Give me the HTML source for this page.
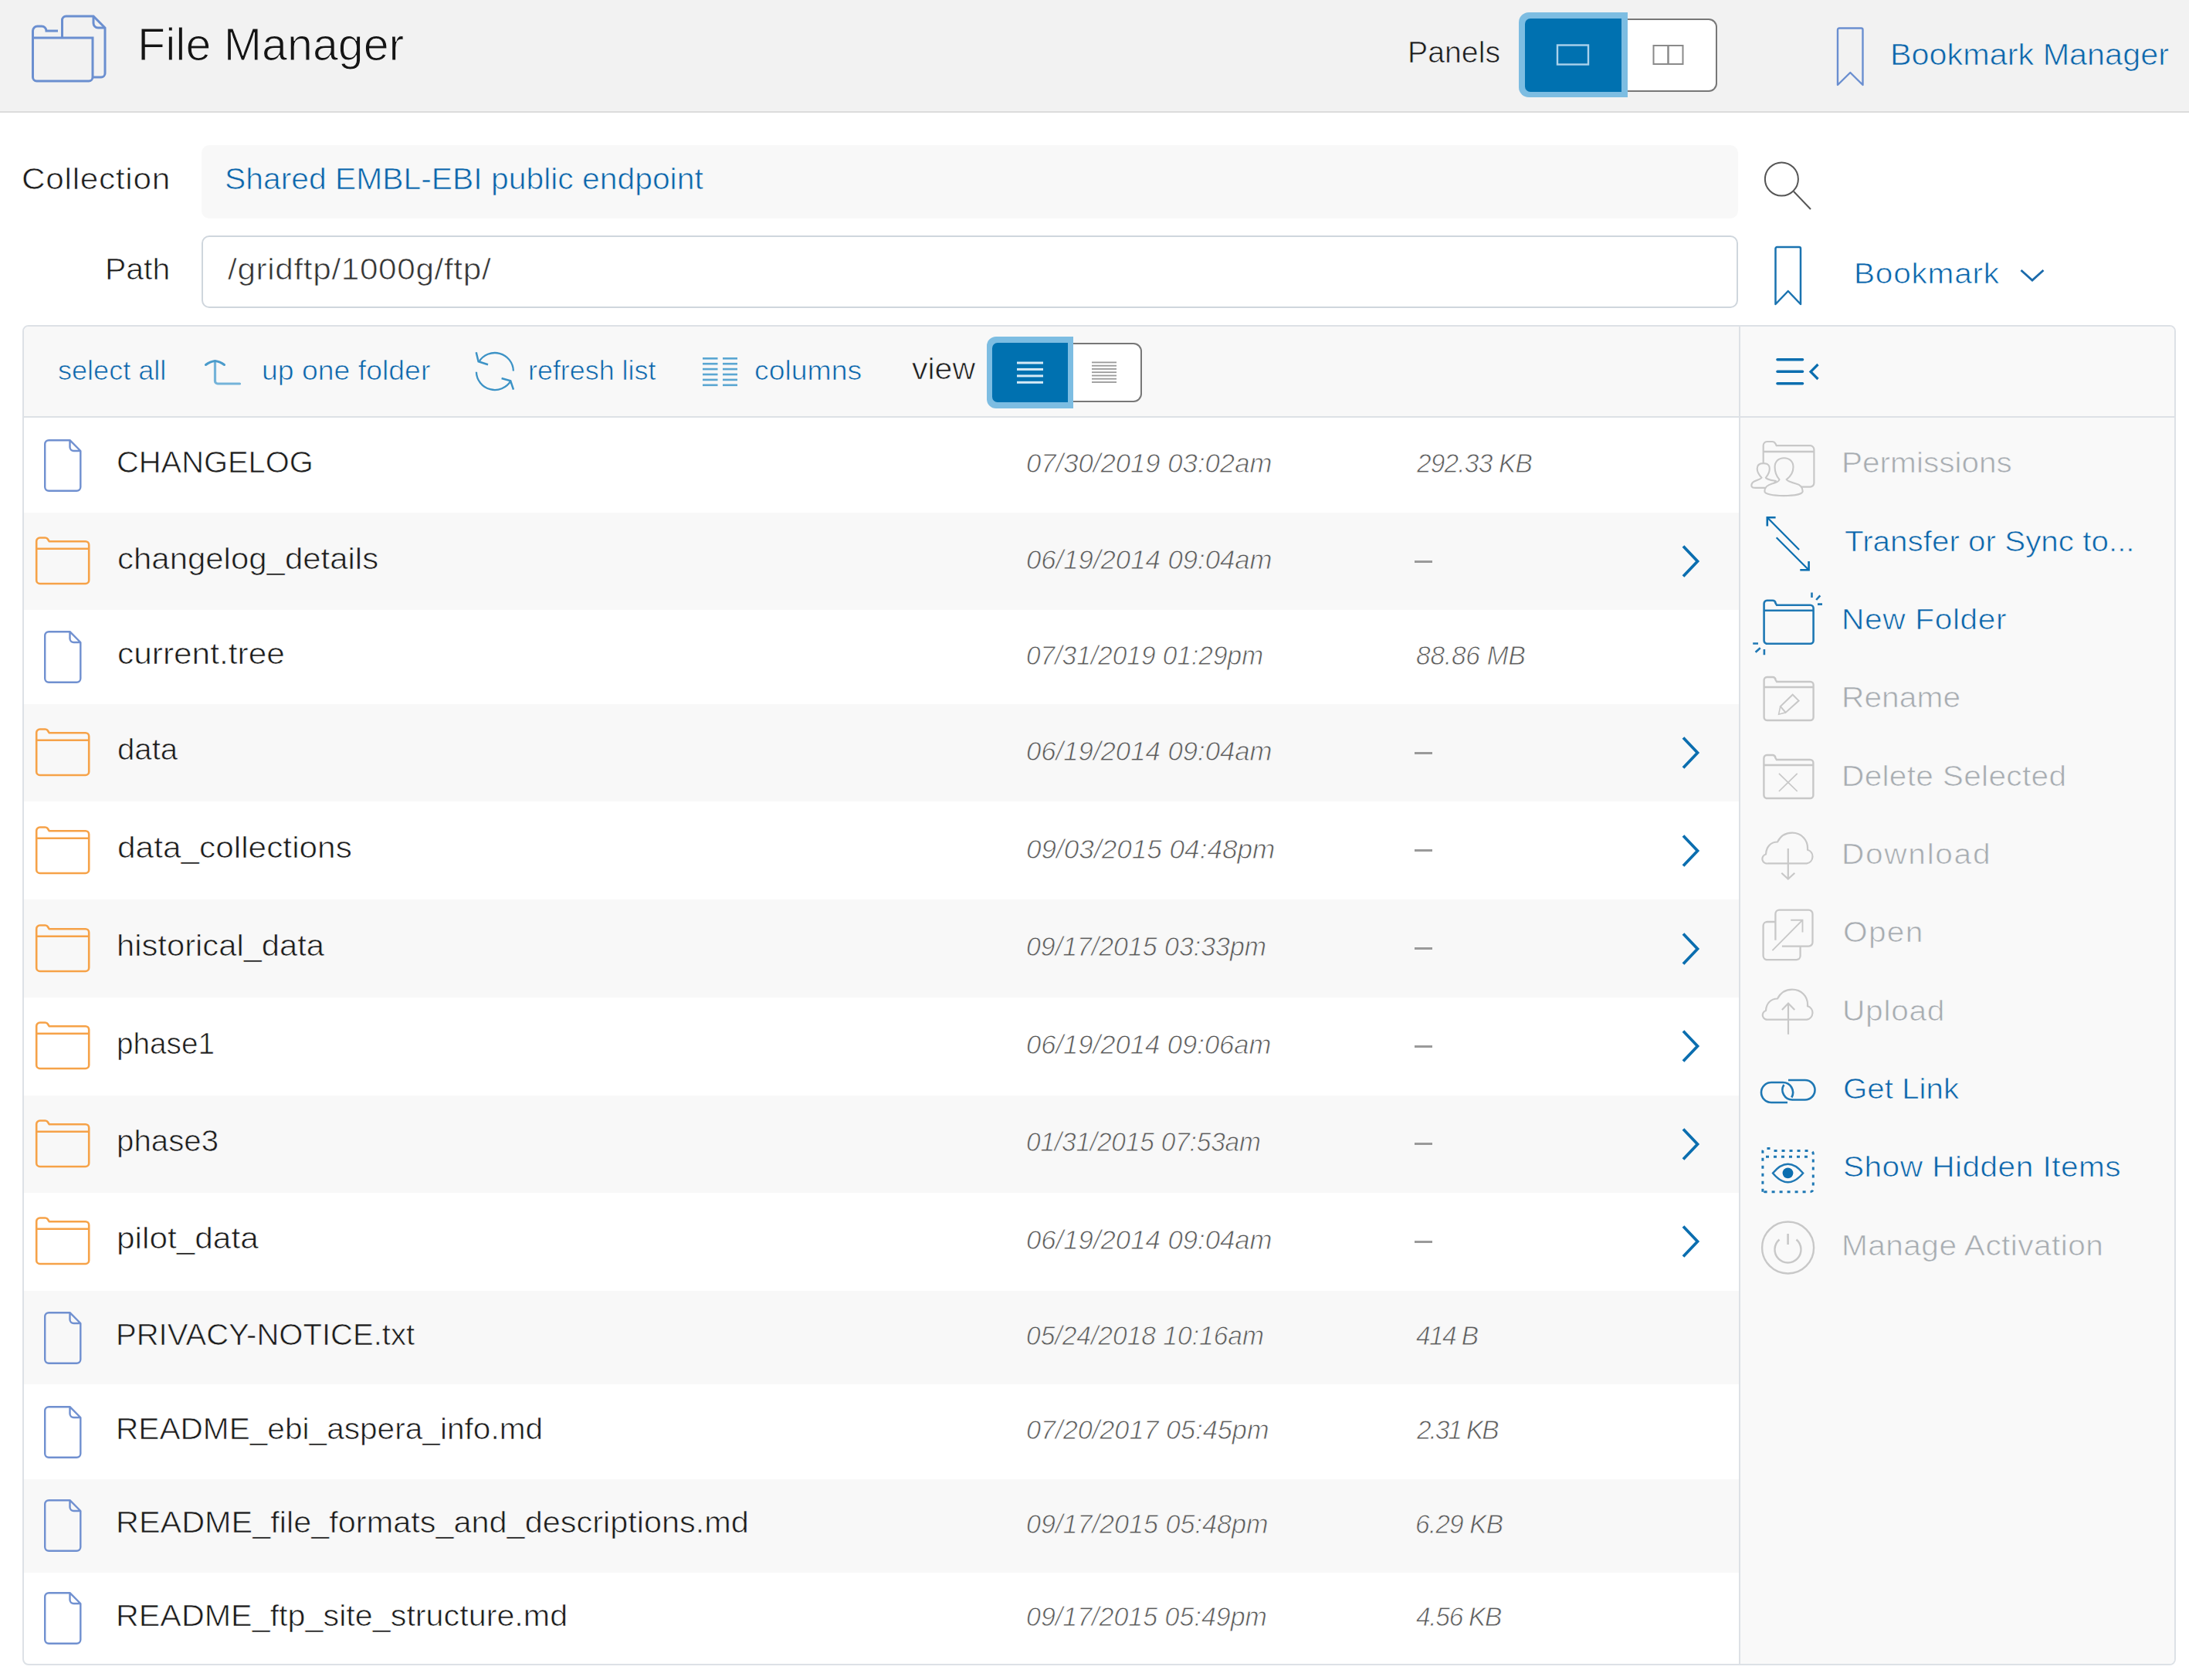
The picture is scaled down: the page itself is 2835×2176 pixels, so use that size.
<!DOCTYPE html>
<html><head><meta charset="utf-8"><style>
html,body{margin:0;padding:0;}
body{width:2835px;height:2176px;position:relative;overflow:hidden;background:#fff;font-family:"Liberation Sans", sans-serif;}
.tx{position:absolute;white-space:nowrap;line-height:1;transform-origin:0 0;}
.ic{position:absolute;overflow:visible;}
</style></head><body>
<div style="position:absolute;left:0;top:0;width:2835px;height:144px;background:#f2f2f2"></div>
<div style="position:absolute;left:0;top:144px;width:2835px;height:2px;background:#dcdcdc"></div>

<!-- header logo -->
<svg class="ic" style="left:40px;top:19px" width="98" height="90" viewBox="0 0 98 90">
 <path d="M40.5,30V7a5,5 0 0 1 5,-5H81L96,17V76a5,5 0 0 1 -5,5H81" fill="none" stroke="#6b8fd0" stroke-width="3"/>
 <path d="M81,2V11a6,6 0 0 0 6,6H96" fill="none" stroke="#6b8fd0" stroke-width="3"/>
 <path d="M2.5,30V21a6,6 0 0 1 6,-6H14a6,6 0 0 1 6,6H35 M2.5,30H80V81a5,5 0 0 1 -5,5H7.5a5,5 0 0 1 -5,-5Z" fill="none" stroke="#6b8fd0" stroke-width="3"/>
</svg>
<!-- panels buttons -->
<div style="position:absolute;left:1966.5px;top:16px;width:141px;height:110px;background:#7dbde2;border-radius:13px 0 0 13px"></div>
<div style="position:absolute;left:2100px;top:24px;width:124px;height:95px;box-sizing:border-box;background:#fff;border:2px solid #777;border-left:none;border-radius:0 11px 11px 0"></div>
<div style="position:absolute;left:2100px;top:16px;width:7.5px;height:110px;background:#7dbde2"></div>
<div style="position:absolute;left:1974.5px;top:24px;width:125.5px;height:95px;background:#0071b0;border-radius:7px 0 0 7px"></div>
<svg class="ic" style="left:2014px;top:56px" width="46" height="30"><rect x="3" y="2.5" width="40" height="25" fill="none" stroke="#aad2ec" stroke-width="2.4"/></svg>
<svg class="ic" style="left:2139px;top:57px" width="44" height="28"><rect x="2.5" y="2" width="19" height="24" fill="none" stroke="#8a8a8a" stroke-width="2"/><rect x="21.5" y="2" width="19" height="24" fill="none" stroke="#8a8a8a" stroke-width="2"/></svg>
<!-- bookmark manager icon -->
<svg class="ic" style="left:2376px;top:33px" width="42" height="82" viewBox="0 0 42 82"><path d="M4,77V5.5a2,2 0 0 1 2,-2H34.5a2,2 0 0 1 2,2V77L20.3,61Z" fill="none" stroke="#6b8fd0" stroke-width="2.4" stroke-linejoin="round"/></svg>
<!-- collection box -->
<div style="position:absolute;left:261px;top:188px;width:1990px;height:95px;background:#f8f8f8;border-radius:10px"></div>
<!-- search -->
<svg class="ic" style="left:2280px;top:205px" width="70" height="70" viewBox="0 0 70 70"><circle cx="27.4" cy="27" r="21.5" fill="none" stroke="#555555" stroke-width="2"/><path d="M43,43L65,66" stroke="#555555" stroke-width="2"/></svg>
<!-- path box -->
<div style="position:absolute;left:261px;top:305px;width:1990px;height:94px;box-sizing:border-box;border:2px solid #cfd6dd;border-radius:10px;background:#fff"></div>
<!-- bookmark icon -->
<svg class="ic" style="left:2296px;top:317px" width="40" height="82" viewBox="0 0 40 82"><path d="M3.5,77V5a2,2 0 0 1 2,-2H34a2,2 0 0 1 2,2V77L19.8,60Z" fill="none" stroke="#1a73b0" stroke-width="2.5" stroke-linejoin="round"/></svg>
<svg class="ic" style="left:2614px;top:346px" width="36" height="20" viewBox="0 0 36 20"><path d="M3.5,4L18,17L32.5,4" fill="none" stroke="#1a6aab" stroke-width="2.8"/></svg>
<!-- panel -->
<div style="position:absolute;left:29px;top:421px;width:2789px;height:1736px;box-sizing:border-box;border:2px solid #dde1e6;border-radius:8px;background:#fff"></div>
<div style="position:absolute;left:31px;top:423px;width:2221px;height:117px;background:#f8f8f8;border-radius:6px 0 0 0"></div>
<div style="position:absolute;left:31px;top:539px;width:2221px;height:2px;background:#dde1e6"></div>
<div style="position:absolute;left:2252px;top:423px;width:564px;height:1732px;background:#f9f9f9;border-radius:0 6px 6px 0"></div>
<div style="position:absolute;left:2252px;top:423px;width:2px;height:1732px;background:#dde1e6"></div>
<div style="position:absolute;left:2254px;top:539px;width:562px;height:2px;background:#dde1e6"></div>

<svg class="ic" style="left:55px;top:566.6px" width="52" height="72" viewBox="0 0 52 72"><path d="M3.2,8.2a5,5 0 0 1 5,-5H35.5L49.3,17V63.8a5,5 0 0 1 -5,5H8.2a5,5 0 0 1 -5,-5Z M35.5,3.2V12a5,5 0 0 0 5,5H49.3" fill="none" stroke="#7090d0" stroke-width="2.4" stroke-linejoin="round"/></svg><div style="position:absolute;left:31px;top:664.3px;width:2221px;height:125.9px;background:#f8f8f8"></div><svg class="ic" style="left:44px;top:694.2px" width="74" height="66" viewBox="0 0 74 66"><path d="M3.2,57.5V7a4.5,4.5 0 0 1 4.5,-4.5H14.5a4,4 0 0 1 3.5,2l1.6,2.7H66.7a4.5,4.5 0 0 1 4.5,4.5V57.5a4.5,4.5 0 0 1 -4.5,4.5H7.7a4.5,4.5 0 0 1 -4.5,-4.5Z M3.2,16.8H71.2" fill="none" stroke="#f6a248" stroke-width="2.6" stroke-linejoin="round"/></svg><svg class="ic" style="left:2174px;top:703.2px" width="30" height="48" viewBox="0 0 30 48"><path d="M6,4.5L24.5,24L6,43.5" fill="none" stroke="#0b6eaf" stroke-width="3.8"/></svg><div style="position:absolute;left:1832px;top:725.8px;width:23px;height:3px;background:#9a9a9a"></div><svg class="ic" style="left:55px;top:815.0px" width="52" height="72" viewBox="0 0 52 72"><path d="M3.2,8.2a5,5 0 0 1 5,-5H35.5L49.3,17V63.8a5,5 0 0 1 -5,5H8.2a5,5 0 0 1 -5,-5Z M35.5,3.2V12a5,5 0 0 0 5,5H49.3" fill="none" stroke="#7090d0" stroke-width="2.4" stroke-linejoin="round"/></svg><div style="position:absolute;left:31px;top:911.8px;width:2221px;height:126.6px;background:#f8f8f8"></div><svg class="ic" style="left:44px;top:942.1px" width="74" height="66" viewBox="0 0 74 66"><path d="M3.2,57.5V7a4.5,4.5 0 0 1 4.5,-4.5H14.5a4,4 0 0 1 3.5,2l1.6,2.7H66.7a4.5,4.5 0 0 1 4.5,4.5V57.5a4.5,4.5 0 0 1 -4.5,4.5H7.7a4.5,4.5 0 0 1 -4.5,-4.5Z M3.2,16.8H71.2" fill="none" stroke="#f6a248" stroke-width="2.6" stroke-linejoin="round"/></svg><svg class="ic" style="left:2174px;top:951.1px" width="30" height="48" viewBox="0 0 30 48"><path d="M6,4.5L24.5,24L6,43.5" fill="none" stroke="#0b6eaf" stroke-width="3.8"/></svg><div style="position:absolute;left:1832px;top:973.6px;width:23px;height:3px;background:#9a9a9a"></div><svg class="ic" style="left:44px;top:1068.8px" width="74" height="66" viewBox="0 0 74 66"><path d="M3.2,57.5V7a4.5,4.5 0 0 1 4.5,-4.5H14.5a4,4 0 0 1 3.5,2l1.6,2.7H66.7a4.5,4.5 0 0 1 4.5,4.5V57.5a4.5,4.5 0 0 1 -4.5,4.5H7.7a4.5,4.5 0 0 1 -4.5,-4.5Z M3.2,16.8H71.2" fill="none" stroke="#f6a248" stroke-width="2.6" stroke-linejoin="round"/></svg><svg class="ic" style="left:2174px;top:1077.8px" width="30" height="48" viewBox="0 0 30 48"><path d="M6,4.5L24.5,24L6,43.5" fill="none" stroke="#0b6eaf" stroke-width="3.8"/></svg><div style="position:absolute;left:1832px;top:1100.3px;width:23px;height:3px;background:#9a9a9a"></div><div style="position:absolute;left:31px;top:1165.3px;width:2221px;height:126.7px;background:#f8f8f8"></div><svg class="ic" style="left:44px;top:1195.7px" width="74" height="66" viewBox="0 0 74 66"><path d="M3.2,57.5V7a4.5,4.5 0 0 1 4.5,-4.5H14.5a4,4 0 0 1 3.5,2l1.6,2.7H66.7a4.5,4.5 0 0 1 4.5,4.5V57.5a4.5,4.5 0 0 1 -4.5,4.5H7.7a4.5,4.5 0 0 1 -4.5,-4.5Z M3.2,16.8H71.2" fill="none" stroke="#f6a248" stroke-width="2.6" stroke-linejoin="round"/></svg><svg class="ic" style="left:2174px;top:1204.7px" width="30" height="48" viewBox="0 0 30 48"><path d="M6,4.5L24.5,24L6,43.5" fill="none" stroke="#0b6eaf" stroke-width="3.8"/></svg><div style="position:absolute;left:1832px;top:1227.2px;width:23px;height:3px;background:#9a9a9a"></div><svg class="ic" style="left:44px;top:1322.3px" width="74" height="66" viewBox="0 0 74 66"><path d="M3.2,57.5V7a4.5,4.5 0 0 1 4.5,-4.5H14.5a4,4 0 0 1 3.5,2l1.6,2.7H66.7a4.5,4.5 0 0 1 4.5,4.5V57.5a4.5,4.5 0 0 1 -4.5,4.5H7.7a4.5,4.5 0 0 1 -4.5,-4.5Z M3.2,16.8H71.2" fill="none" stroke="#f6a248" stroke-width="2.6" stroke-linejoin="round"/></svg><svg class="ic" style="left:2174px;top:1331.3px" width="30" height="48" viewBox="0 0 30 48"><path d="M6,4.5L24.5,24L6,43.5" fill="none" stroke="#0b6eaf" stroke-width="3.8"/></svg><div style="position:absolute;left:1832px;top:1353.8px;width:23px;height:3px;background:#9a9a9a"></div><div style="position:absolute;left:31px;top:1418.7px;width:2221px;height:125.9px;background:#f8f8f8"></div><svg class="ic" style="left:44px;top:1448.7px" width="74" height="66" viewBox="0 0 74 66"><path d="M3.2,57.5V7a4.5,4.5 0 0 1 4.5,-4.5H14.5a4,4 0 0 1 3.5,2l1.6,2.7H66.7a4.5,4.5 0 0 1 4.5,4.5V57.5a4.5,4.5 0 0 1 -4.5,4.5H7.7a4.5,4.5 0 0 1 -4.5,-4.5Z M3.2,16.8H71.2" fill="none" stroke="#f6a248" stroke-width="2.6" stroke-linejoin="round"/></svg><svg class="ic" style="left:2174px;top:1457.7px" width="30" height="48" viewBox="0 0 30 48"><path d="M6,4.5L24.5,24L6,43.5" fill="none" stroke="#0b6eaf" stroke-width="3.8"/></svg><div style="position:absolute;left:1832px;top:1480.2px;width:23px;height:3px;background:#9a9a9a"></div><svg class="ic" style="left:44px;top:1575.2px" width="74" height="66" viewBox="0 0 74 66"><path d="M3.2,57.5V7a4.5,4.5 0 0 1 4.5,-4.5H14.5a4,4 0 0 1 3.5,2l1.6,2.7H66.7a4.5,4.5 0 0 1 4.5,4.5V57.5a4.5,4.5 0 0 1 -4.5,4.5H7.7a4.5,4.5 0 0 1 -4.5,-4.5Z M3.2,16.8H71.2" fill="none" stroke="#f6a248" stroke-width="2.6" stroke-linejoin="round"/></svg><svg class="ic" style="left:2174px;top:1584.2px" width="30" height="48" viewBox="0 0 30 48"><path d="M6,4.5L24.5,24L6,43.5" fill="none" stroke="#0b6eaf" stroke-width="3.8"/></svg><div style="position:absolute;left:1832px;top:1606.7px;width:23px;height:3px;background:#9a9a9a"></div><div style="position:absolute;left:31px;top:1671.8px;width:2221px;height:121.6px;background:#f8f8f8"></div><svg class="ic" style="left:55px;top:1696.6px" width="52" height="72" viewBox="0 0 52 72"><path d="M3.2,8.2a5,5 0 0 1 5,-5H35.5L49.3,17V63.8a5,5 0 0 1 -5,5H8.2a5,5 0 0 1 -5,-5Z M35.5,3.2V12a5,5 0 0 0 5,5H49.3" fill="none" stroke="#7090d0" stroke-width="2.4" stroke-linejoin="round"/></svg><svg class="ic" style="left:55px;top:1818.5px" width="52" height="72" viewBox="0 0 52 72"><path d="M3.2,8.2a5,5 0 0 1 5,-5H35.5L49.3,17V63.8a5,5 0 0 1 -5,5H8.2a5,5 0 0 1 -5,-5Z M35.5,3.2V12a5,5 0 0 0 5,5H49.3" fill="none" stroke="#7090d0" stroke-width="2.4" stroke-linejoin="round"/></svg><div style="position:absolute;left:31px;top:1915.5px;width:2221px;height:121.0px;background:#f8f8f8"></div><svg class="ic" style="left:55px;top:1940.0px" width="52" height="72" viewBox="0 0 52 72"><path d="M3.2,8.2a5,5 0 0 1 5,-5H35.5L49.3,17V63.8a5,5 0 0 1 -5,5H8.2a5,5 0 0 1 -5,-5Z M35.5,3.2V12a5,5 0 0 0 5,5H49.3" fill="none" stroke="#7090d0" stroke-width="2.4" stroke-linejoin="round"/></svg><svg class="ic" style="left:55px;top:2060.3px" width="52" height="72" viewBox="0 0 52 72"><path d="M3.2,8.2a5,5 0 0 1 5,-5H35.5L49.3,17V63.8a5,5 0 0 1 -5,5H8.2a5,5 0 0 1 -5,-5Z M35.5,3.2V12a5,5 0 0 0 5,5H49.3" fill="none" stroke="#7090d0" stroke-width="2.4" stroke-linejoin="round"/></svg>

<svg class="ic" style="left:262px;top:462px" width="52" height="40" viewBox="0 0 52 40"><path d="M16.5,6.5V31.5a3.5,3.5 0 0 0 3.5,3.5H48.5" fill="none" stroke="#74b3d9" stroke-width="3.2" stroke-linecap="round"/><path d="M4.5,10.5Q10,6.2 16.5,5.4Q23,6.2 28.5,10.5" fill="none" stroke="#4a9bcb" stroke-width="3" stroke-linecap="round"/></svg>
<svg class="ic" style="left:612px;top:452px" width="58" height="58" viewBox="0 0 58 58">
 <path d="M8.28,16.72A24,24 0 0 1 52.89,28.41" fill="none" stroke="#3d93c6" stroke-width="2.3"/>
 <path d="M4.7,4.3L7.6,16.3L20,20.3" fill="none" stroke="#3d93c6" stroke-width="2.5"/>
 <path d="M4.9,29.7A24,24 0 0 0 49.45,41.4" fill="none" stroke="#3d93c6" stroke-width="2.3"/>
 <path d="M37.6,38L49.2,41.3L53,52.6" fill="none" stroke="#3d93c6" stroke-width="2.5"/>
</svg>
<svg class="ic" style="left:908px;top:460px" width="50" height="42" viewBox="0 0 50 42">
 <rect x="2" y="3.0" width="19.5" height="2.6" fill="#5aa6d2"/><rect x="28" y="3.0" width="19" height="2.6" fill="#5aa6d2"/><rect x="2" y="9.9" width="19.5" height="2.6" fill="#5aa6d2"/><rect x="28" y="9.9" width="19" height="2.6" fill="#5aa6d2"/><rect x="2" y="16.8" width="19.5" height="2.6" fill="#5aa6d2"/><rect x="28" y="16.8" width="19" height="2.6" fill="#5aa6d2"/><rect x="2" y="23.7" width="19.5" height="2.6" fill="#5aa6d2"/><rect x="28" y="23.7" width="19" height="2.6" fill="#5aa6d2"/><rect x="2" y="30.6" width="19.5" height="2.6" fill="#5aa6d2"/><rect x="28" y="30.6" width="19" height="2.6" fill="#5aa6d2"/><rect x="2" y="37.5" width="19.5" height="2.6" fill="#5aa6d2"/><rect x="28" y="37.5" width="19" height="2.6" fill="#5aa6d2"/>
</svg>
<!-- view buttons -->
<div style="position:absolute;left:1278px;top:436px;width:112px;height:93px;background:#7dbde2;border-radius:12px 0 0 12px"></div>
<div style="position:absolute;left:1383px;top:444px;width:96px;height:77px;box-sizing:border-box;background:#fff;border:2px solid #777;border-left:none;border-radius:0 11px 11px 0"></div>
<div style="position:absolute;left:1383px;top:436px;width:7px;height:93px;background:#7dbde2"></div>
<div style="position:absolute;left:1285px;top:444px;width:98px;height:77px;background:#0071b0;border-radius:7px 0 0 7px"></div>
<svg class="ic" style="left:1314px;top:466px" width="40" height="34"><rect x="3" y="2.5" width="34" height="3" fill="#d6eaf6"/><rect x="3" y="10.9" width="34" height="3" fill="#d6eaf6"/><rect x="3" y="19.4" width="34" height="3" fill="#d6eaf6"/><rect x="3" y="27.8" width="34" height="3" fill="#d6eaf6"/></svg>
<svg class="ic" style="left:1412px;top:466px" width="36" height="34"><rect x="2" y="2.5" width="32" height="1.8" fill="#9a9a9a"/><rect x="2" y="6.8" width="32" height="1.8" fill="#9a9a9a"/><rect x="2" y="11.0" width="32" height="1.8" fill="#9a9a9a"/><rect x="2" y="15.3" width="32" height="1.8" fill="#9a9a9a"/><rect x="2" y="19.6" width="32" height="1.8" fill="#9a9a9a"/><rect x="2" y="23.8" width="32" height="1.8" fill="#9a9a9a"/><rect x="2" y="28.1" width="32" height="1.8" fill="#9a9a9a"/></svg>
<!-- hamburger -->
<svg class="ic" style="left:2298px;top:460px" width="62" height="42" viewBox="0 0 62 42">
 <path d="M4,5.8H36.5M4,21.3H36.5M4,36.8H36.5" stroke="#0b6eaf" stroke-width="3.6" stroke-linecap="round"/>
 <path d="M56.5,12L47,21.5L56.5,31" fill="none" stroke="#0b6eaf" stroke-width="3.2"/>
</svg>


<svg class="ic" style="left:2262px;top:565px" width="96" height="82" viewBox="0 0 96 82">
 <path d="M21.7,36V12a5,5 0 0 1 5,-5H33a5,5 0 0 1 4.5,2.8l1.2,2.4H82.4a5,5 0 0 1 5,5V60.6a5,5 0 0 1 -5,5H68" fill="none" stroke="#c8c8c8" stroke-width="2.2"/>
 <path d="M21.7,20H87.4" stroke="#c8c8c8" stroke-width="2.4"/>
 <path d="M19.5,53.7C15,49 13.7,45 13.7,42C13.7,37.5 17,35.1 21.75,35.1C26.5,35.1 29.8,37.5 29.8,42C29.8,46 28,50 24.9,53.7C26,56 30,56.5 38,58L30,66.9H12C8,66.9 6.3,66 6.3,64C6.3,62 7,60 10,58.5C14,56.5 18,56 19.5,53.7Z" fill="#f9f9f9" stroke="#c8c8c8" stroke-width="2.1" stroke-linejoin="round"/>
 <path d="M42.5,56.1C38,51 36.6,46 36.6,40C36.6,33 41,28.3 48.5,28.3C56,28.3 60.5,33 60.5,40C60.5,46 58.5,51 51.7,56.1C53,58.5 58,60 64,61.5C70,63 72.7,67 72.7,71.3C72.7,75 62,77.1 48,77.1C34,77.1 23.4,75 23.4,71.3C23.4,67 27,63 33,61.5C39,60 42,58.5 42.5,56.1Z" fill="#f9f9f9" stroke="#c8c8c8" stroke-width="2.1"/>
</svg>
<svg class="ic" style="left:2282px;top:664px" width="68" height="80" viewBox="0 0 68 80">
 <path d="M6.8,6.3L48.1,48.1 M18.7,32.3L60.6,74.2" stroke="#0b6eaf" stroke-width="2.2"/>
 <path d="M17.6,6.3H6.8V17.6 M49.3,74.2H60.6V62.9" fill="none" stroke="#0b6eaf" stroke-width="2.6"/>
</svg>
<svg class="ic" style="left:2266px;top:764px" width="98" height="88" viewBox="0 0 98 88">
 <path d="M18.6,23.8V17.8a4,4 0 0 1 4,-4H29.6a4,4 0 0 1 4,3.5l1.5,2.5H78.6a4,4 0 0 1 4,4V65.8a4,4 0 0 1 -4,4H22.6a4,4 0 0 1 -4,-4Z M18.6,26.8H82.6" fill="none" stroke="#1f78b4" stroke-width="2.6" />
 <path d="M80.5,3.4V10.1 M86.2,13L91.3,7.3 M88,18.6H94" stroke="#1f78b4" stroke-width="2.6"/>
 <path d="M4.2,69.5H11 M7.6,80.8L13.8,75.2 M18.9,76.9V84.2" stroke="#1f78b4" stroke-width="2.6"/>
</svg>
<svg class="ic" style="left:2266px;top:862px" width="98" height="80" viewBox="0 0 98 80">
 <path d="M18.6,25V19a4,4 0 0 1 4,-4H29.6a4,4 0 0 1 4,3.5l1.5,2.5H78.6a4,4 0 0 1 4,4V67a4,4 0 0 1 -4,4H22.6a4,4 0 0 1 -4,-4Z M18.6,28H82.6" fill="none" stroke="#c8c8c8" stroke-width="2.4" />
 <path d="M55.7,37.7L63.6,45.6L46.6,60.9L39.8,53Z" fill="none" stroke="#c8c8c8" stroke-width="2"/>
 <path d="M39.8,53L37.6,63.2L46.6,60.9" fill="none" stroke="#c8c8c8" stroke-width="1.6"/>
</svg>
<svg class="ic" style="left:2266px;top:964px" width="98" height="80" viewBox="0 0 98 80">
 <path d="M18.4,24V18a4,4 0 0 1 4,-4H29.4a4,4 0 0 1 4,3.5l1.5,2.5H78.4a4,4 0 0 1 4,4V66a4,4 0 0 1 -4,4H22.4a4,4 0 0 1 -4,-4Z M18.4,27H82.4" fill="none" stroke="#c8c8c8" stroke-width="2.4" />
 <path d="M37.9,37.8L61.7,61 M61.7,37.8L37.9,61" stroke="#c8c8c8" stroke-width="1.7"/>
</svg>
<svg class="ic" style="left:2266px;top:1064px" width="98" height="82" viewBox="0 0 98 82">
 <path d="M24,54.3H74a9,9 0 0 0 1,-17.5C76,24 67,14.7 55,14.7C46.5,14.7 40,19 36,26.5C27,26.5 21.5,33 21,42.5a6,6 0 0 0 3,11.8Z" fill="none" stroke="#c8c8c8" stroke-width="2.2" stroke-linejoin="round"/>
 <path d="M49.8,35V74.6 M41.3,66.7L49.8,74.6L58.3,66.7" fill="none" stroke="#c8c8c8" stroke-width="2.2"/>
</svg>
<svg class="ic" style="left:2266px;top:1164px" width="98" height="86" viewBox="0 0 98 86">
 <path d="M33.4,30H22.6a5,5 0 0 0 -5,5V74.1a5,5 0 0 0 5,5H60.6a5,5 0 0 0 5,-5V62.6 M33.4,53.7V19.7a5,5 0 0 1 5,-5H76.5a5,5 0 0 1 5,5V56.6a5,5 0 0 1 -5,5H41.9" fill="none" stroke="#c8c8c8" stroke-width="2.3"/>
 <path d="M29.4,67.2L68.5,27.7 M53.2,27.7H68.5V43.5" fill="none" stroke="#c8c8c8" stroke-width="1.9"/>
</svg>
<svg class="ic" style="left:2266px;top:1264px" width="98" height="82" viewBox="0 0 98 82">
 <path d="M24,56.6H74a9,9 0 0 0 1,-17.5C76,26.6 67,17.6 55,17.6C46.5,17.6 40,22 36,29.5C27,29.5 21.5,36 21,45a6,6 0 0 0 3,11.6Z" fill="none" stroke="#c8c8c8" stroke-width="2.2" stroke-linejoin="round"/>
 <path d="M50,35.6V75.8 M41.9,44.1L50,35.6L58.3,44.1" fill="none" stroke="#c8c8c8" stroke-width="2.2"/>
</svg>
<svg class="ic" style="left:2266px;top:1384px" width="98" height="58" viewBox="0 0 98 58">
 <path d="M49,44H28A13,13 0 0 1 28,18H43A13,13 0 0 1 54.3,37.5" fill="none" stroke="#1f78b4" stroke-width="2.6"/>
 <path d="M50,15H71.75A12.75,12.75 0 0 1 71.75,40.5H55.25A12.75,12.75 0 0 1 44.4,21" fill="none" stroke="#1f78b4" stroke-width="2.6"/>
</svg>
<svg class="ic" style="left:2266px;top:1475px" width="98" height="80" viewBox="0 0 98 80">
 <path d="M16.9,68.8V17a4,4 0 0 1 4,-4.5H27a4,4 0 0 1 3.5,2l1,1H78.3a4,4 0 0 1 4,4V64.8a4,4 0 0 1 -4,4H20.9a4,4 0 0 1 -4,-4Z" fill="none" stroke="#1f78b4" stroke-width="3" stroke-dasharray="4 6"/>
 <path d="M20,23.3H80" fill="none" stroke="#1f78b4" stroke-width="3" stroke-dasharray="4 6" stroke-dashoffset="-1"/>
 <path d="M30,44.5Q49.5,21 69.2,44.5Q49.5,68 30,44.5Z" fill="none" stroke="#1f78b4" stroke-width="2.4"/>
 <circle cx="49.5" cy="44.3" r="6.9" fill="#0b6eaf"/>
</svg>
<svg class="ic" style="left:2276px;top:1577px" width="80" height="80" viewBox="0 0 80 80">
 <circle cx="39.6" cy="39" r="33.5" fill="none" stroke="#c8c8c8" stroke-width="2.4"/>
 <path d="M28.5,28.5A17,17 0 1 0 50.5,28.5" fill="none" stroke="#c8c8c8" stroke-width="2.4"/>
 <path d="M39.6,21V35" stroke="#c8c8c8" stroke-width="2.6"/>
</svg>

<div class="tx" style="left:177.56px;top:27.91px;font-size:60px;color:#141414;letter-spacing:0.000px;transform:scaleX(0.9862);-webkit-text-stroke:1.2px #f2f2f2">File Manager</div><div class="tx" style="left:1822.64px;top:49.31px;font-size:38.5px;color:#1c1c1c;letter-spacing:0.000px;transform:scaleX(1.0197);-webkit-text-stroke:0.7px #f2f2f2">Panels</div><div class="tx" style="left:2447.53px;top:52.33px;font-size:38px;color:#0b65ab;letter-spacing:0.000px;transform:scaleX(1.0884);-webkit-text-stroke:0.7px #f2f2f2">Bookmark Manager</div><div class="tx" style="left:27.90px;top:213.11px;font-size:38.5px;color:#1c1c1c;letter-spacing:0.635px;transform:scaleX(1.1000);-webkit-text-stroke:0.7px #ffffff">Collection</div><div class="tx" style="left:291.34px;top:213.11px;font-size:38.5px;color:#0b65ab;letter-spacing:0.000px;transform:scaleX(1.0607);-webkit-text-stroke:0.7px #f8f8f8">Shared EMBL-EBI public endpoint</div><div class="tx" style="left:135.81px;top:330.11px;font-size:38.5px;color:#1c1c1c;letter-spacing:0.000px;transform:scaleX(1.0639);-webkit-text-stroke:0.7px #ffffff">Path</div><div class="tx" style="left:294.70px;top:330.11px;font-size:38.5px;color:#333333;letter-spacing:0.558px;transform:scaleX(1.1000);-webkit-text-stroke:0.7px #ffffff">/gridftp/1000g/ftp/</div><div class="tx" style="left:2400.70px;top:336.08px;font-size:37px;color:#0b65ab;letter-spacing:0.642px;transform:scaleX(1.1000);-webkit-text-stroke:0.7px #ffffff">Bookmark</div><div class="tx" style="left:74.80px;top:462.47px;font-size:35px;color:#0b65ab;letter-spacing:0.000px;transform:scaleX(1.0305);-webkit-text-stroke:0.7px #f8f8f8">select all</div><div class="tx" style="left:338.56px;top:462.47px;font-size:35px;color:#0b65ab;letter-spacing:0.000px;transform:scaleX(1.0687);-webkit-text-stroke:0.7px #f8f8f8">up one folder</div><div class="tx" style="left:684.25px;top:462.47px;font-size:35px;color:#0b65ab;letter-spacing:-0.000px;transform:scaleX(1.0250);-webkit-text-stroke:0.7px #f8f8f8">refresh list</div><div class="tx" style="left:977.23px;top:462.47px;font-size:35px;color:#0b65ab;letter-spacing:0.000px;transform:scaleX(1.0681);-webkit-text-stroke:0.7px #f8f8f8">columns</div><div class="tx" style="left:1181.20px;top:458.93px;font-size:38px;color:#1c1c1c;letter-spacing:0.000px;transform:scaleX(1.0787);-webkit-text-stroke:0.7px #f8f8f8">view</div><div class="tx" style="left:150.98px;top:578.91px;font-size:39.5px;color:#1c1c1c;letter-spacing:0.000px;transform:scaleX(1.0093);-webkit-text-stroke:0.7px #ffffff">CHANGELOG</div><div class="tx" style="left:1328.99px;top:583.45px;font-size:34.5px;color:#5a5a5a;letter-spacing:0.000px;transform:scaleX(1.0058);font-style:italic;-webkit-text-stroke:0.8px #ffffff">07/30/2019 03:02am</div><div class="tx" style="left:1834.97px;top:583.45px;font-size:34.5px;color:#5a5a5a;letter-spacing:-0.849px;transform:scaleX(0.9700);font-style:italic;-webkit-text-stroke:0.8px #ffffff">292.33 KB</div><div class="tx" style="left:151.94px;top:703.51px;font-size:39.5px;color:#1c1c1c;letter-spacing:0.000px;transform:scaleX(1.0619);-webkit-text-stroke:0.7px #f8f8f8">changelog_details</div><div class="tx" style="left:1328.99px;top:708.05px;font-size:34.5px;color:#5a5a5a;letter-spacing:0.000px;transform:scaleX(1.0064);font-style:italic;-webkit-text-stroke:0.8px #f8f8f8">06/19/2014 09:04am</div><div class="tx" style="left:151.93px;top:827.26px;font-size:39.5px;color:#1c1c1c;letter-spacing:0.000px;transform:scaleX(1.0735);-webkit-text-stroke:0.7px #ffffff">current.tree</div><div class="tx" style="left:1329.03px;top:831.80px;font-size:34.5px;color:#5a5a5a;letter-spacing:0.000px;transform:scaleX(0.9702);font-style:italic;-webkit-text-stroke:0.8px #ffffff">07/31/2019 01:29pm</div><div class="tx" style="left:1834.00px;top:831.80px;font-size:34.5px;color:#5a5a5a;letter-spacing:-0.215px;transform:scaleX(0.9700);font-style:italic;-webkit-text-stroke:0.8px #ffffff">88.86 MB</div><div class="tx" style="left:151.98px;top:951.36px;font-size:39.5px;color:#1c1c1c;letter-spacing:0.000px;transform:scaleX(1.0170);-webkit-text-stroke:0.7px #f8f8f8">data</div><div class="tx" style="left:1328.99px;top:955.90px;font-size:34.5px;color:#5a5a5a;letter-spacing:0.000px;transform:scaleX(1.0064);font-style:italic;-webkit-text-stroke:0.8px #f8f8f8">06/19/2014 09:04am</div><div class="tx" style="left:151.93px;top:1078.11px;font-size:39.5px;color:#1c1c1c;letter-spacing:0.000px;transform:scaleX(1.0727);-webkit-text-stroke:0.7px #ffffff">data_collections</div><div class="tx" style="left:1328.98px;top:1082.65px;font-size:34.5px;color:#5a5a5a;letter-spacing:-0.000px;transform:scaleX(1.0182);font-style:italic;-webkit-text-stroke:0.8px #ffffff">09/03/2015 04:48pm</div><div class="tx" style="left:150.89px;top:1204.91px;font-size:39.5px;color:#1c1c1c;letter-spacing:0.000px;transform:scaleX(1.0564);-webkit-text-stroke:0.7px #f8f8f8">historical_data</div><div class="tx" style="left:1329.02px;top:1209.45px;font-size:34.5px;color:#5a5a5a;letter-spacing:0.000px;transform:scaleX(0.9826);font-style:italic;-webkit-text-stroke:0.8px #f8f8f8">09/17/2015 03:33pm</div><div class="tx" style="left:151.04px;top:1331.61px;font-size:39.5px;color:#1c1c1c;letter-spacing:0.000px;transform:scaleX(0.9793);-webkit-text-stroke:0.7px #ffffff">phase1</div><div class="tx" style="left:1329.00px;top:1336.15px;font-size:34.5px;color:#5a5a5a;letter-spacing:-0.000px;transform:scaleX(1.0029);font-style:italic;-webkit-text-stroke:0.8px #ffffff">06/19/2014 09:06am</div><div class="tx" style="left:150.96px;top:1457.91px;font-size:39.5px;color:#1c1c1c;letter-spacing:-0.000px;transform:scaleX(1.0188);-webkit-text-stroke:0.7px #f8f8f8">phase3</div><div class="tx" style="left:1329.03px;top:1462.45px;font-size:34.5px;color:#5a5a5a;letter-spacing:-0.190px;transform:scaleX(0.9700);font-style:italic;-webkit-text-stroke:0.8px #f8f8f8">01/31/2015 07:53am</div><div class="tx" style="left:150.86px;top:1584.46px;font-size:39.5px;color:#1c1c1c;letter-spacing:-0.000px;transform:scaleX(1.0724);-webkit-text-stroke:0.7px #ffffff">pilot_data</div><div class="tx" style="left:1328.99px;top:1589.00px;font-size:34.5px;color:#5a5a5a;letter-spacing:0.000px;transform:scaleX(1.0064);font-style:italic;-webkit-text-stroke:0.8px #ffffff">06/19/2014 09:04am</div><div class="tx" style="left:149.96px;top:1708.86px;font-size:39.5px;color:#1c1c1c;letter-spacing:-0.000px;transform:scaleX(1.0134);-webkit-text-stroke:0.7px #f8f8f8">PRIVACY-NOTICE.txt</div><div class="tx" style="left:1329.03px;top:1713.40px;font-size:34.5px;color:#5a5a5a;letter-spacing:0.000px;transform:scaleX(0.9731);font-style:italic;-webkit-text-stroke:0.8px #f8f8f8">05/24/2018 10:16am</div><div class="tx" style="left:1834.00px;top:1713.40px;font-size:34.5px;color:#5a5a5a;letter-spacing:-1.668px;transform:scaleX(0.9700);font-style:italic;-webkit-text-stroke:0.8px #f8f8f8">414 B</div><div class="tx" style="left:149.92px;top:1830.71px;font-size:39.5px;color:#1c1c1c;letter-spacing:0.000px;transform:scaleX(1.0282);-webkit-text-stroke:0.7px #ffffff">README_ebi_aspera_info.md</div><div class="tx" style="left:1329.01px;top:1835.25px;font-size:34.5px;color:#5a5a5a;letter-spacing:0.000px;transform:scaleX(0.9934);font-style:italic;-webkit-text-stroke:0.8px #ffffff">07/20/2017 05:45pm</div><div class="tx" style="left:1834.97px;top:1835.25px;font-size:34.5px;color:#5a5a5a;letter-spacing:-2.158px;transform:scaleX(0.9700);font-style:italic;-webkit-text-stroke:0.8px #ffffff">2.31 KB</div><div class="tx" style="left:149.85px;top:1952.26px;font-size:39.5px;color:#1c1c1c;letter-spacing:0.000px;transform:scaleX(1.0489);-webkit-text-stroke:0.7px #f8f8f8">README_file_formats_and_descriptions.md</div><div class="tx" style="left:1329.01px;top:1956.80px;font-size:34.5px;color:#5a5a5a;letter-spacing:0.000px;transform:scaleX(0.9905);font-style:italic;-webkit-text-stroke:0.8px #f8f8f8">09/17/2015 05:48pm</div><div class="tx" style="left:1833.03px;top:1956.80px;font-size:34.5px;color:#5a5a5a;letter-spacing:-0.880px;transform:scaleX(0.9700);font-style:italic;-webkit-text-stroke:0.8px #f8f8f8">6.29 KB</div><div class="tx" style="left:149.86px;top:2072.61px;font-size:39.5px;color:#1c1c1c;letter-spacing:0.000px;transform:scaleX(1.0454);-webkit-text-stroke:0.7px #ffffff">README_ftp_site_structure.md</div><div class="tx" style="left:1329.01px;top:2077.15px;font-size:34.5px;color:#5a5a5a;letter-spacing:0.000px;transform:scaleX(0.9855);font-style:italic;-webkit-text-stroke:0.8px #ffffff">09/17/2015 05:49pm</div><div class="tx" style="left:1834.00px;top:2077.15px;font-size:34.5px;color:#5a5a5a;letter-spacing:-1.321px;transform:scaleX(0.9700);font-style:italic;-webkit-text-stroke:0.8px #ffffff">4.56 KB</div><div class="tx" style="left:2385.21px;top:581.38px;font-size:37px;color:#a7acb1;letter-spacing:0.000px;transform:scaleX(1.0960);-webkit-text-stroke:0.7px #f9f9f9">Permissions</div><div class="tx" style="left:2388.50px;top:682.71px;font-size:37px;color:#0b65ab;letter-spacing:0.000px;transform:scaleX(1.0916);-webkit-text-stroke:0.7px #f9f9f9">Transfer or Sync to...</div><div class="tx" style="left:2385.20px;top:784.04px;font-size:37px;color:#0b65ab;letter-spacing:0.562px;transform:scaleX(1.1000);-webkit-text-stroke:0.7px #f9f9f9">New Folder</div><div class="tx" style="left:2385.20px;top:885.37px;font-size:37px;color:#a7acb1;letter-spacing:0.036px;transform:scaleX(1.1000);-webkit-text-stroke:0.7px #f9f9f9">Rename</div><div class="tx" style="left:2385.20px;top:986.70px;font-size:37px;color:#a7acb1;letter-spacing:0.240px;transform:scaleX(1.1000);-webkit-text-stroke:0.7px #f9f9f9">Delete Selected</div><div class="tx" style="left:2385.20px;top:1088.03px;font-size:37px;color:#a7acb1;letter-spacing:1.498px;transform:scaleX(1.1000);-webkit-text-stroke:0.7px #f9f9f9">Download</div><div class="tx" style="left:2387.40px;top:1189.36px;font-size:37px;color:#a7acb1;letter-spacing:1.143px;transform:scaleX(1.1000);-webkit-text-stroke:0.7px #f9f9f9">Open</div><div class="tx" style="left:2386.30px;top:1290.69px;font-size:37px;color:#a7acb1;letter-spacing:0.629px;transform:scaleX(1.1000);-webkit-text-stroke:0.7px #f9f9f9">Upload</div><div class="tx" style="left:2387.41px;top:1392.02px;font-size:37px;color:#0b65ab;letter-spacing:0.000px;transform:scaleX(1.0889);-webkit-text-stroke:0.7px #f9f9f9">Get Link</div><div class="tx" style="left:2387.40px;top:1493.35px;font-size:37px;color:#0b65ab;letter-spacing:0.383px;transform:scaleX(1.1000);-webkit-text-stroke:0.7px #f9f9f9">Show Hidden Items</div><div class="tx" style="left:2385.20px;top:1594.68px;font-size:37px;color:#a7acb1;letter-spacing:0.352px;transform:scaleX(1.1000);-webkit-text-stroke:0.7px #f9f9f9">Manage Activation</div>
</body></html>
